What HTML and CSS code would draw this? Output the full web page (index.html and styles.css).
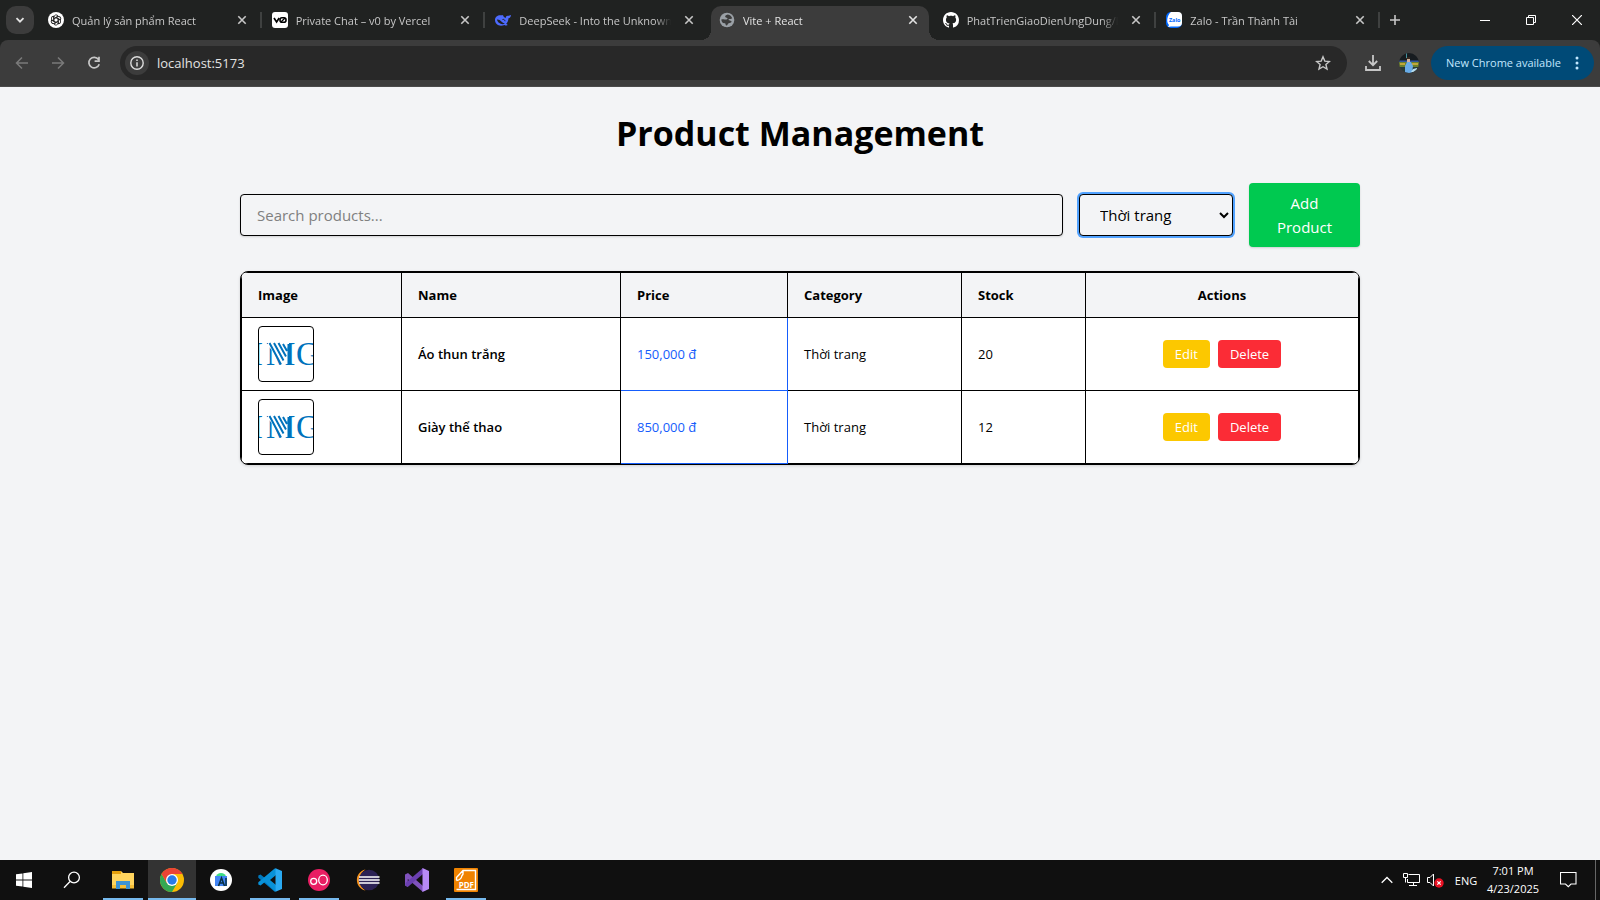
FILE: index.html
```html
<!DOCTYPE html>
<html lang="en">
<head>
<meta charset="utf-8">
<meta name="viewport" content="width=device-width, initial-scale=1">
<title>Vite + React</title>
<link rel="stylesheet" href="styles.css">
</head>
<body>
<svg class="defs" aria-hidden="true">
  <symbol id="close" viewBox="0 0 10 10"><path d="M1.3 1.3l7.4 7.4M8.7 1.3L1.3 8.7" stroke="currentColor" stroke-width="1.6" fill="none"/></symbol>
  <symbol id="img-logo" viewBox="0 0 54 54">
    <g fill="#0072bc" font-family="Liberation Serif, serif" font-size="33">
      <text x="-7" y="38">I</text><text x="7" y="38">M</text><text x="37" y="38">G</text>
    </g>
    <path d="M9 14h21v4l-2 4v8l-6 8-8-14-5-5z" fill="#fff"/>
    <path d="M10.500 16l11.500 21.500M15 16l9.500 17.500M19.500 16l7.500 13.500M24 17l4 7M29.500 17v20" stroke="#0072bc" stroke-width="2" fill="none"/>
  </symbol>
</svg>

<header class="browser">
  <div class="tabstrip">
    <button class="tab-search" aria-label="Search tabs"><svg width="10" height="10" viewBox="0 0 10 10"><path d="M1.5 3.2L5 6.7l3.5-3.5" stroke="#e3e3e3" stroke-width="1.8" fill="none"/></svg></button>
    <nav class="tabs">
      <div class="tab">
        <svg class="favicon" viewBox="0 0 16 16"><circle cx="8" cy="8" r="8" fill="#fff"/><g fill="none" stroke="#222" stroke-width=".9"><path id="petal" d="M6 9.2V5.1a2.2 2.2 0 0 1 4.1-1.1L6.500 6.200"/><use href="#petal" transform="rotate(60 8 8)"/><use href="#petal" transform="rotate(120 8 8)"/><use href="#petal" transform="rotate(180 8 8)"/><use href="#petal" transform="rotate(240 8 8)"/><use href="#petal" transform="rotate(300 8 8)"/></g></svg>
        <a class="tab-title" href="#">Quản lý sản phẩm React</a>
        <button class="tab-close" aria-label="Close tab"><svg><use href="#close"/></svg></button>
      </div>
      <div class="tab">
        <svg class="favicon" viewBox="0 0 16 16"><rect width="16" height="16" rx="3" fill="#fff"/><path d="M2 6l2.600 4L7.200 6" fill="none" stroke="#000" stroke-width="1.700"/><rect x="8" y="5.800" width="6" height="4.500" rx="2" fill="none" stroke="#000" stroke-width="1.600"/><path d="M9 10l4-4" stroke="#000" stroke-width="1.200"/></svg>
        <a class="tab-title" href="#">Private Chat – v0 by Vercel</a>
        <button class="tab-close" aria-label="Close tab"><svg><use href="#close"/></svg></button>
      </div>
      <div class="tab before-active">
        <svg class="favicon" viewBox="0 0 16 16"><path d="M0 8C0 4.500 3 2.800 6 3.200c1 .2 1.500.2 2-.2.200 1.700 1.400 2.500 2.700 3 .2-1.400.8-2.300 2-2.300 1 .2 2-.2 3.300-.7-.2 1.900-1 3-2.500 3.300-.2 2.500-1 4.200-2.300 5.400l1.600 1.400c-1.200.6-2.400.400-3.300-.2C4.500 15 0 12.500 0 8z" fill="#4d6bfe"/><path d="M2 7.500c3.500-.5 5 3.700 8 4-3 1.800-7.500-.500-8-4z" fill="#202221"/><path d="M7.500 7.500c1.300-.4 2.300.2 2.500 1.700" fill="none" stroke="#202221"/></svg>
        <a class="tab-title" href="#">DeepSeek - Into the Unknown</a>
        <button class="tab-close" aria-label="Close tab"><svg><use href="#close"/></svg></button>
      </div>
      <div class="tab active">
        <svg class="favicon" viewBox="0 0 16 16"><circle cx="8" cy="8" r="7.300" fill="#9aa0a6"/><path d="M8.800 2.500c-2 .5-3 1.500-2.500 2.500.6.900 2.200.3 2.200 1.500 0 1-1.500 1.300-3 .9-.9-.3-2-.4-3.200 0 .1 1.400.7 2.600 1.700 3.600l1.900.3c.8.2.5 1.600 1.300 2.300 1.700-.3 1.300-1.800 2.500-2.400 1-.6 2.700-.2 3.100-1.700-.9-.5-1.700-1.400-2.700-1.300-.900 0-.7-1.300.2-1.300 1.200 0 1.900.2 2.900-.6-.6-1.900-2.200-3.500-4.400-3.800z" fill="#3c3c3c"/></svg>
        <a class="tab-title" href="#" aria-current="page">Vite + React</a>
        <button class="tab-close" aria-label="Close tab"><svg><use href="#close"/></svg></button>
      </div>
      <div class="tab">
        <svg class="favicon" viewBox="0 0 16 16"><path fill="#fff" d="M8 0C3.580 0 0 3.580 0 8c0 3.540 2.290 6.530 5.470 7.590.4.070.55-.17.55-.38 0-.19-.01-.82-.01-1.490-2.010.37-2.530-.49-2.690-.94-.09-.23-.48-.94-.82-1.130-.28-.15-.68-.52-.01-.53.63-.01 1.080.58 1.230.82.72 1.210 1.870.87 2.330.66.07-.52.28-.87.51-1.070-1.780-.2-3.640-.89-3.640-3.950 0-.87.31-1.590.82-2.150-.08-.2-.36-1.020.08-2.120 0 0 .67-.21 2.200.82.64-.18 1.320-.27 2-.27s1.360.09 2 .27c1.530-1.040 2.200-.82 2.200-.82.44 1.100.16 1.920.08 2.120.51.56.82 1.270.82 2.150 0 3.070-1.870 3.750-3.650 3.950.29.25.54.73.54 1.480 0 1.070-.01 1.930-.01 2.200 0 .21.15.46.55.38A8.010 8.010 0 0 0 16 8c0-4.420-3.580-8-8-8z"/></svg>
        <a class="tab-title" href="#">PhatTrienGiaoDienUngDung/Lab</a>
        <button class="tab-close" aria-label="Close tab"><svg><use href="#close"/></svg></button>
      </div>
      <div class="tab">
        <svg class="favicon" viewBox="0 0 16 16"><rect width="16" height="16" rx="5" fill="#0068ff"/><path d="M5 0h7a4 4 0 0 1 4 4v6.500a4 4 0 0 1-4 4H5l-3 .5 1-2C1.300 11 1 9 1.400 6.500 1.800 4 3 1.500 5 0z" fill="#fff"/><text x="8.700" y="9.500" text-anchor="middle" font-family="Open Sans, sans-serif" font-size="5.500" font-weight="700" fill="#0068ff">Zalo</text></svg>
        <a class="tab-title" href="#">Zalo - Trần Thành Tài</a>
        <button class="tab-close" aria-label="Close tab"><svg><use href="#close"/></svg></button>
      </div>
    </nav>
    <div class="strip-end">
      <button class="new-tab" aria-label="New tab"><svg width="12" height="12" viewBox="0 0 12 12"><path d="M6 1v10M1 6h10" stroke="#c7c7c7" stroke-width="1.600"/></svg></button>
      <div class="window-controls">
        <button aria-label="Minimize"><svg width="10" height="10" viewBox="0 0 10 10"><path d="M0 5.500h10" stroke="#fff"/></svg></button>
        <button aria-label="Restore"><svg width="10" height="10" viewBox="0 0 10 10" fill="none" stroke="#fff"><path d="M.5 2.500h7v7h-7zM2.500 2.500v-2h7v7h-2"/></svg></button>
        <button aria-label="Close"><svg width="10" height="10" viewBox="0 0 10 10"><path d="M0 0l10 10M10 0L0 10" stroke="#fff" stroke-width="1.200"/></svg></button>
      </div>
    </div>
  </div>

  <div class="toolbar">
    <button class="nav-button" aria-label="Back" disabled><svg width="14" height="14" viewBox="0 0 14 14" fill="none" stroke="#7a7a7a" stroke-width="1.500"><path d="M13 7H2M7 1.500L1.500 7 7 12.500"/></svg></button>
    <button class="nav-button" aria-label="Forward" disabled><svg width="14" height="14" viewBox="0 0 14 14" fill="none" stroke="#7a7a7a" stroke-width="1.500"><path d="M1 7h11M7 1.500L12.500 7 7 12.500"/></svg></button>
    <button class="nav-button" aria-label="Reload"><svg width="14" height="14" viewBox="0 0 14 14" fill="none" stroke="#c7c7c7" stroke-width="1.700"><path d="M11.500 3.500A5.300 5.300 0 1 0 12.200 8.300M12 .8v4.400H7.600"/></svg></button>
    <div class="omnibox">
      <button class="site-info" aria-label="View site information"><svg width="14" height="14" viewBox="0 0 14 14"><circle cx="7" cy="7" r="6.200" fill="none" stroke="#dcdcdc" stroke-width="1.400"/><path d="M7 6.200v4.200M7 3.500v1.500" stroke="#dcdcdc" stroke-width="1.500"/></svg></button>
      <input class="address" type="text" value="localhost:5173" aria-label="Address">
      <button class="bookmark" aria-label="Bookmark this tab"><svg width="16" height="16" viewBox="0 0 16 16"><path d="M8 1.800l1.800 4.300 4.600.4-3.500 3 1.100 4.600L8 11.700l-4 2.400 1.100-4.600-3.500-3 4.600-.4z" fill="none" stroke="#c7c7c7" stroke-width="1.400"/></svg></button>
    </div>
    <button class="tool" aria-label="Downloads"><svg width="16" height="16" viewBox="0 0 16 16" fill="none" stroke="#c7c7c7" stroke-width="1.800"><path d="M8 0v10M3.800 6L8 10.200 12.200 6M1 11v4h14v-4"/></svg></button>
    <button class="tool" aria-label="Profile"><svg width="20" height="20" viewBox="0 0 20 20"><clipPath id="round"><circle cx="10" cy="10" r="10"/></clipPath><g clip-path="url(#round)"><path fill="#171c20" d="M0 0h20v9H0z"/><path fill="#3157a0" d="M0 7.500h20V9H0z"/><path fill="#6d812c" d="M0 9h20v5H0z"/><path fill="#263b38" d="M0 14h20v6H0z"/><path fill="#c0a73a" d="M1 10h5v2H1zM13 10h6v2h-6z"/><path fill="#69ace8" d="M8 9h4l2 4-1 7H6v-7z"/><path fill="#d4b19a" d="M8 6h3v3H8z"/><path fill="#35281f" d="M7 4h4v2H7z"/><path fill="#b7ddef" d="M14 16l4-1v4h-6z"/><path d="M7.500 0v5" stroke="#44909c"/></g></svg></button>
    <button class="update">New Chrome available<svg width="4" height="14" viewBox="0 0 4 14" fill="#c2e7ff"><circle cx="2" cy="2" r="1.500"/><circle cx="2" cy="7" r="1.500"/><circle cx="2" cy="12" r="1.500"/></svg></button>
  </div>
</header>

<main class="page">
  <div class="container">
    <h1>Product Management</h1>
    <div class="filters">
      <input class="search" type="text" placeholder="Search products..." aria-label="Search products">
      <select class="category" aria-label="Category"><option>Thời trang</option></select>
      <button class="add">Add Product</button>
    </div>
    <div class="table-card">
      <table>
        <colgroup><col class="c-image"><col class="c-name"><col class="c-price"><col class="c-category"><col class="c-stock"><col></colgroup>
        <thead>
          <tr><th>Image</th><th>Name</th><th>Price</th><th>Category</th><th>Stock</th><th class="actions">Actions</th></tr>
        </thead>
        <tbody>
          <tr>
            <td><svg class="thumb" role="img" aria-label="Áo thun trắng"><use href="#img-logo"/></svg></td>
            <td class="name">Áo thun trắng</td><td class="price">150,000 đ</td><td>Thời trang</td><td>20</td>
            <td class="actions"><div class="action-row"><button class="edit">Edit</button><button class="delete">Delete</button></div></td>
          </tr>
          <tr>
            <td><svg class="thumb" role="img" aria-label="Giày thể thao"><use href="#img-logo"/></svg></td>
            <td class="name">Giày thể thao</td><td class="price">850,000 đ</td><td>Thời trang</td><td>12</td>
            <td class="actions"><div class="action-row"><button class="edit">Edit</button><button class="delete">Delete</button></div></td>
          </tr>
        </tbody>
      </table>
    </div>
  </div>
</main>

<footer class="taskbar">
  <button aria-label="Start"><svg width="16" height="16" viewBox="0 0 16 16" fill="#fff"><path d="M0 2.300L6.500 1.400v6.200H0zM7.300 1.300L16 0v7.600H7.300zM0 8.400h6.500v6.200L0 13.700zM7.300 8.400H16V16l-8.700-1.300z"/></svg></button>
  <button aria-label="Search"><svg width="18" height="18" viewBox="0 0 18 18" fill="none" stroke="#fff" stroke-width="1.300"><circle cx="11" cy="6.500" r="5.400"/><path d="M7 10.500L1 16.700"/></svg></button>
  <div class="apps">
    <button class="open" aria-label="File Explorer"><svg width="22" height="20" viewBox="0 0 22 20"><path d="M0 1h9l2 2h11v15H0z" fill="#ffd45e"/><path d="M0 1h9v3H0z" fill="#e5a00d"/><path d="M0 15h22v3.500H0z" fill="#f5bd36"/><path d="M4 11h14v8h-4v-4H8v4H4z" fill="#3c93d5"/></svg></button>
    <button class="open current" aria-label="Google Chrome"><svg width="24" height="24" viewBox="0 0 24 24"><circle cx="12" cy="12" r="12" fill="#fbbc04"/><path d="M6.800 15L1.600 6A12 12 0 0 0 12 24l5.200-9z" fill="#34a853"/><path d="M1.600 6A12 12 0 0 1 22.400 6H12L6.800 15z" fill="#ea4335"/><circle cx="12" cy="12" r="6" fill="#fff"/><circle cx="12" cy="12" r="4.700" fill="#287be8"/></svg></button>
    <button aria-label="Android Studio"><svg width="22" height="22" viewBox="0 0 22 22"><circle cx="11" cy="11" r="11" fill="#fff"/><path d="M6 8a5 4 0 0 1 10 0z" fill="#3ddc84"/><rect x="5" y="7" width="12" height="10" fill="#4285f4"/><path d="M8.500 17l3-8 3 8M9.500 14h4M16 9v8" fill="none" stroke="#073042" stroke-width="1.500"/></svg></button>
    <button class="open" aria-label="Visual Studio Code"><svg width="24" height="24" viewBox="0 0 24 24"><path d="M17.500.2L7 10 2.500 6.500.3 7.600v2.100l16.400 14 1.800-1.200V1z" fill="#0078bd"/><path d="M17.500 23.800L7 14l-4.500 3.500-2.200-1.100v-2.100L16.700.4l2.300 2z" fill="#0891d8"/><path d="M18 7v10l-6-5z" fill="#101010"/><path d="M17.500.2L24 3v18l-6.500 2.800z" fill="#2aaaf2"/></svg></button>
    <button class="open" aria-label="oO"><svg width="22" height="22" viewBox="0 0 22 22"><circle cx="11" cy="11" r="11" fill="#e91e63"/><circle cx="5.700" cy="12.300" r="3" fill="none" stroke="#fff" stroke-width="1.300"/><ellipse cx="15" cy="11" rx="4.300" ry="4.800" fill="none" stroke="#fff" stroke-width="1.300"/></svg></button>
    <button aria-label="Eclipse"><svg width="24" height="22" viewBox="0 0 24 22"><path d="M9.500.5C-2 3-2 19 9.500 21.500 2 17 2 5 9.500.5z" fill="#f7941e"/><circle cx="13" cy="11" r="10.300" fill="#2c2255"/><path d="M3 8h20.500M2.700 11h21M3 14h20.500" stroke="#fff" stroke-width="1.700"/></svg></button>
    <button aria-label="Visual Studio"><svg width="24" height="24" viewBox="0 0 24 24"><path d="M0 6.500L3 5l15 13v6L2.800 11v8L0 17.500z" fill="#8052bd"/><path d="M2.800 19L18 6V0L.5 15v2.500z" fill="#6a3fb0"/><path d="M17.500 0L24 3v18l-6.500 3z" fill="#b78af5"/></svg></button>
    <button class="open" aria-label="Foxit PDF"><svg width="24" height="24" viewBox="0 0 24 24"><rect width="24" height="24" rx="1" fill="#f08300"/><path d="M2.500 12.500v-3L9 2.500h12.500v9.500M2.500 12.500c3-.5 5-2 5.500-5M9 2.500v3.500c-.2 1-.7 1.500-1.500 2M2.500 21.500h19V12" fill="none" stroke="#fff" stroke-width="1.400"/><text x="12.300" y="20" text-anchor="middle" font-family="Open Sans, sans-serif" font-weight="700" font-size="8" fill="#fff">PDF</text></svg></button>
  </div>
  <div class="tray">
    <button class="tray-icon" aria-label="Show hidden icons"><svg width="12" height="8" viewBox="0 0 12 8"><path d="M.7 6.800L6 1.500l5.300 5.300" fill="none" stroke="#fff" stroke-width="1.300"/></svg></button>
    <button class="tray-icon" aria-label="Network"><svg width="17" height="14" viewBox="0 0 17 14" fill="none" stroke="#fff"><path d="M5.500 1.500h11v8h-12V6M10.500 9.500v3M6 12.500h8M.5.500h4v4h-4zM2.500 4.500v5"/></svg></button>
    <button class="tray-icon" aria-label="Volume muted"><svg width="17" height="15" viewBox="0 0 17 15"><path d="M.5 4.500H3L6.500 1v12L3 9.500H.500z" fill="none" stroke="#fff"/><circle cx="12" cy="10" r="4.700" fill="#e81123"/><path d="M10.300 8.300l3.400 3.400M13.700 8.300l-3.400 3.400" stroke="#fff" stroke-width="1.200"/></svg></button>
    <button class="language">ENG</button>
    <button class="clock"><span>7:01 PM</span><span>4/23/2025</span></button>
    <button class="notifications" aria-label="Notifications"><svg width="17" height="16" viewBox="0 0 17 16"><path d="M.5.500h15.500v11.500h-5l-2.700 2.700L5.500 12h-5z" fill="none" stroke="#fff" stroke-width="1.100"/></svg></button>
    <button class="show-desktop" aria-label="Show desktop"></button>
  </div>
</footer>
</body>
</html>
```
FILE: styles.css
```css
* { box-sizing: border-box; }

body {
  margin: 0;
  min-height: 100vh;
  display: flex;
  flex-direction: column;
  background: #f3f4f6;
  color: #000;
  font-family: "Open Sans", "Noto Sans", sans-serif;
}

button, input, select { font: inherit; color: inherit; }

button {
  border: 0;
  padding: 0;
  background: none;
  display: flex;
  align-items: center;
  justify-content: center;
}

svg { flex: none; }
.defs { position: absolute; width: 0; height: 0; }

/* Browser chrome */
.browser { background: #202221; }

.tabstrip { display: flex; height: 40px; }

.tab-search {
  flex: none;
  width: 28px;
  height: 28px;
  margin: 6px;
  border-radius: 10px;
  background: #3c3c3c;
}

.tabs {
  flex: 1;
  display: grid;
  grid-template-columns: repeat(6, minmax(0, 1fr));
}

.tab {
  display: flex;
  align-items: center;
  gap: 8px;
  height: 34px;
  margin: 6px 6px 0 0;
  padding: 0 6px 6px 8px;
  position: relative;
  color: #c7c7c7;
}

.tab::after {
  content: "";
  position: absolute;
  right: -4px;
  top: 6px;
  width: 2px;
  height: 16px;
  background: #3f4140;
}

.tab.before-active::after { display: none; }

.tab.active {
  background: #3c3c3c;
  border-radius: 10px 10px 0 0;
  color: #e3e3e3;
}

.tab.active::before,
.tab.active::after {
  content: "";
  position: absolute;
  top: auto;
  bottom: 0;
  width: 10px;
  height: 10px;
}

.tab.active::before {
  left: -10px;
  background: radial-gradient(circle at 0 0, transparent 10px, #3c3c3c 10px);
}

.tab.active::after {
  right: -10px;
  background: radial-gradient(circle at 100% 0, transparent 10px, #3c3c3c 10px);
}

.favicon { width: 16px; height: 16px; }

.tab-title {
  flex: 1;
  min-width: 0;
  padding-top: 1px;
  overflow: hidden;
  white-space: nowrap;
  color: inherit;
  text-decoration: none;
  font-size: 11px;
  line-height: 20px;
  mask-image: linear-gradient(to right, #000 calc(100% - 16px), transparent);
}

.tab-close { width: 20px; height: 20px; }
.tab-close svg { width: 10px; height: 10px; }

.strip-end {
  width: 218px;
  display: flex;
  justify-content: space-between;
}

.new-tab { width: 26px; }
.window-controls { display: flex; }
.window-controls button { width: 46px; }

.toolbar {
  display: flex;
  align-items: center;
  height: 47px;
  padding: 0 6px 1px 4px;
  background: #3c3c3c;
  border-bottom: 1px solid #4a4a4a;
  border-radius: 8px 8px 0 0;
}

.nav-button { width: 36px; height: 34px; }

.omnibox {
  flex: 1;
  display: flex;
  align-items: center;
  height: 34px;
  margin: 0 8px;
  padding: 0 12px 0 5px;
  border-radius: 17px;
  background: #282828;
}

.site-info {
  width: 24px;
  height: 24px;
  border-radius: 12px;
  background: #3c3c3c;
}

.address {
  flex: 1;
  min-width: 0;
  border: 0;
  padding: 0 8px;
  outline: 0;
  background: none;
  color: #e3e3e3;
  font-size: 13px;
}

.bookmark { width: 24px; height: 24px; }
.tool { width: 36px; height: 34px; }

.update {
  width: 163px;
  height: 34px;
  margin-left: 4px;
  padding: 0 15px;
  justify-content: space-between;
  border-radius: 17px;
  background: #004a77;
  color: #c2e7ff;
  font-size: 11px;
  white-space: nowrap;
}

/* Product page */
.page { flex: 1; padding: 24px 16px; }

.container { max-width: 1120px; margin: 0 auto; }

h1 {
  margin: 0 0 28px;
  text-align: center;
  font-size: 34px;
  line-height: 44px;
  font-weight: 700;
}

.filters {
  display: flex;
  align-items: center;
  gap: 16px;
  margin-bottom: 24px;
}

.search,
.category {
  height: 42px;
  padding: 8px 16px;
  border: 1px solid #000;
  border-radius: 4px;
  background: #f3f4f6;
  font-size: 15px;
  box-shadow: 0 1px 2px rgba(0, 0, 0, 0.15);
}

.search { flex: 1; min-width: 0; }
.search::placeholder { color: #808080; opacity: 1; }

.category {
  width: 154px;
  outline: 0;
  box-shadow: 0 0 0 2px #51a2ff;
}

.add {
  width: 111px;
  padding: 8px 16px;
  border-radius: 4px;
  background: #00c950;
  color: #fff;
  font-size: 15px;
  line-height: 24px;
  box-shadow: 0 1px 2px rgba(0, 0, 0, 0.15);
}

.table-card {
  overflow: hidden;
  border: 1px solid #000;
  border-radius: 8px;
  background: #fff;
  box-shadow: 0 1px 3px rgba(0, 0, 0, 0.15);
}

table {
  width: 100%;
  table-layout: fixed;
  border-collapse: separate;
  border-spacing: 0;
  border: solid #000;
  border-width: 1px 0 0 1px;
  font-size: 13px;
  line-height: 20px;
}

.c-image { width: 160px; }
.c-name { width: 219px; }
.c-price { width: 167px; }
.c-category { width: 174px; }
.c-stock { width: 124px; }

th, td {
  padding: 8px 16px;
  border: solid #000;
  border-width: 0 1px 1px 0;
  text-align: left;
}

th {
  padding: 12px 16px;
  background: #f3f4f6;
  font-weight: 700;
}

.name { font-weight: 600; }

.price {
  color: #155dfc;
  border-color: #155dfc;
}

.actions { text-align: center; }

.thumb {
  display: block;
  width: 56px;
  height: 56px;
  border: 1px solid #000;
  border-radius: 4px;
}

.action-row {
  display: flex;
  justify-content: center;
  gap: 8px;
}

.edit, .delete {
  padding: 4px 12px;
  border-radius: 4px;
  color: #fff;
}

.edit { background: #fcc800; }
.delete { background: #fb2c36; }

/* Taskbar */
.taskbar {
  display: flex;
  height: 40px;
  background: #101010;
  color: #fff;
  font-size: 12px;
}

.taskbar > button, .apps button { width: 48px; }

.apps {
  display: flex;
  gap: 1px;
  margin-left: 3px;
}

.apps button { position: relative; }

.open::after {
  content: "";
  position: absolute;
  left: 4px;
  right: 4px;
  bottom: 0;
  height: 2px;
  background: #76b9ed;
}

.current { background: #333; }
.current::after { left: 0; right: 0; }

.tray { display: flex; margin-left: auto; }
.tray-icon { width: 24px; }
.language { width: 38px; font-size: 11px; }

.clock {
  width: 56px;
  flex-direction: column;
  line-height: 18px;
  font-size: 11px;
}

.notifications { width: 54px; }
.show-desktop { width: 5px; border-left: 1px solid #666; }
```
